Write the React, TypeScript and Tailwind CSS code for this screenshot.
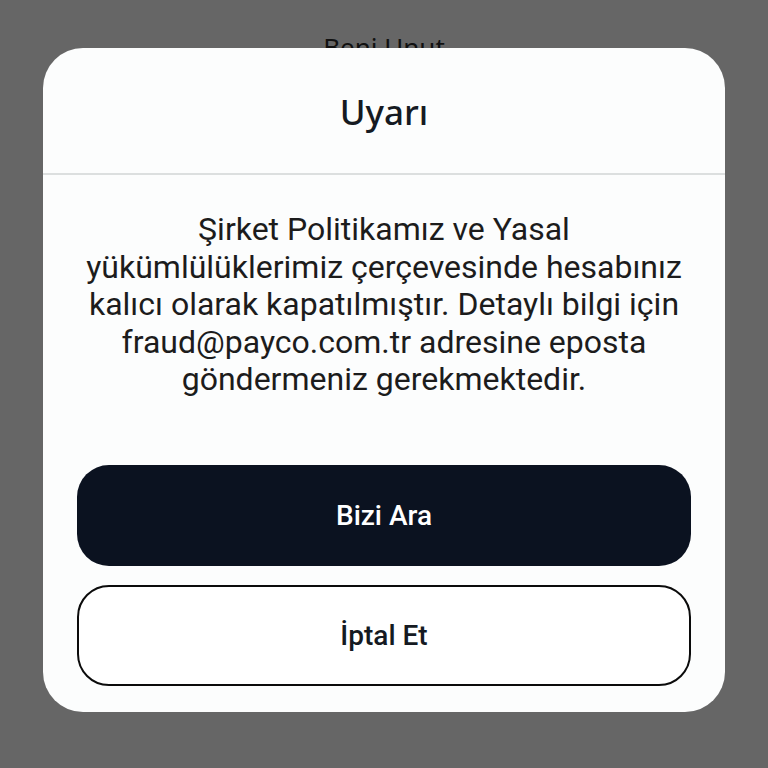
export default function App() {
  return (
    <div className="relative h-[768px] w-[768px] overflow-hidden bg-[#666666] font-['Roboto',sans-serif]">
      {/* page behind the overlay */}
      <div className="absolute left-0 right-0 top-[28px] text-center font-['Noto_Sans',sans-serif] text-[26px] text-[#111111]">
        Beni Unut
      </div>

      {/* Modal */}
      <div className="absolute left-[43px] top-[48px] flex h-[664px] w-[682px] flex-col rounded-[40px] bg-[#fcfdfd]">
        <div className="flex h-[127px] items-center justify-center border-b-2 border-[#dcdfdf] pt-[3px]">
          <h2 className="font-['Noto_Sans',sans-serif] text-[35px] font-medium text-[#151a22]">Uyarı</h2>
        </div>

        <p className="mx-auto mt-[36px] w-[620px] text-center text-[32px] leading-[37.5px] text-[#1c1c1c]">
          Şirket Politikamız ve Yasal yükümlülüklerimiz çerçevesinde hesabınız kalıcı olarak kapatılmıştır. Detaylı bilgi için fraud@payco.com.tr adresine eposta göndermeniz gerekmektedir.
        </p>

        <div className="mt-auto flex flex-col gap-[19px] px-[34px] pb-[26px]">
          <button className="flex h-[101px] items-center justify-center rounded-[32px] bg-[#0b1220] text-[28px] font-medium text-white">
            Bizi Ara
          </button>
          <button className="flex h-[101px] items-center justify-center rounded-[32px] border-2 border-[#0b0b0b] bg-white text-[28px] font-medium text-[#151a22]">
            İptal Et
          </button>
        </div>
      </div>
    </div>
  )
}
